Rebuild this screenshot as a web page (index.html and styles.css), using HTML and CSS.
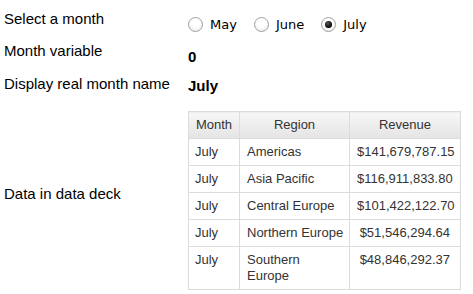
FILE: index.html
```
<!DOCTYPE html>
<html lang="en">
<head>
    <meta charset="UTF-8">
    <title>Month selector</title>
    <link rel="stylesheet" href="styles.css">
</head>
<body>
    <div class="page">
        <div class="row row-select">
            <div class="label">Select a month</div>
            <div class="value radios">
                <label class="radio"><input type="radio" name="month" value="5"> May</label>
                <label class="radio"><input type="radio" name="month" value="6"> June</label>
                <label class="radio"><input type="radio" name="month" value="7" checked> July</label>
            </div>
        </div>
        <div class="row row-var">
            <div class="label">Month variable</div>
            <div class="value strong">0</div>
        </div>
        <div class="row row-name">
            <div class="label">Display real month name</div>
            <div class="value strong">July</div>
        </div>
        <div class="row row-deck">
            <div class="label deck-label">Data in data deck</div>
            <table class="deck">
                <colgroup>
                    <col class="c-month">
                    <col class="c-region">
                    <col class="c-revenue">
                </colgroup>
                <thead>
                    <tr><th>Month</th><th>Region</th><th>Revenue</th></tr>
                </thead>
                <tbody>
                    <tr><td>July</td><td>Americas</td><td class="num">$141,679,787.15</td></tr>
                    <tr><td>July</td><td>Asia Pacific</td><td class="num">$116,911,833.80</td></tr>
                    <tr><td>July</td><td>Central Europe</td><td class="num">$101,422,122.70</td></tr>
                    <tr><td>July</td><td>Northern Europe</td><td class="num">$51,546,294.64</td></tr>
                    <tr><td>July</td><td>Southern<br>Europe</td><td class="num">$48,846,292.37</td></tr>
                </tbody>
            </table>
        </div>
    </div>
</body>
</html>
```

FILE: styles.css
```
body { margin: 0; background: #fff; font-family: "Liberation Sans", Arial, sans-serif; color: #000; }
.page { padding: 10px 0 0 4px; }
.row { display: flex; align-items: flex-start; }
.label { width: 184px; font-size: 15px; line-height: 17px; flex: none; }
.value { font-size: 15px; line-height: 17px; }
.strong { font-weight: bold; }
.row-select { height: 32px; }
.row-select .value { padding-top: 6px; }
.row-var { height: 33px; }
.row-var .value { padding-top: 6px; }
.row-name { height: 36px; }
.row-name .value { padding-top: 2px; }
.row-deck { align-items: center; }
.deck-label { padding-bottom: 14px; }

.radios { display: flex; gap: 17px; font-family: "DejaVu Sans", Tahoma, sans-serif; font-size: 13px; }
.radio { display: flex; align-items: center; gap: 7px; }
.radio input { appearance: none; -webkit-appearance: none; margin: 0; width: 15px; height: 15px; border-radius: 50%; border: 1px solid #a0a0a0; background: radial-gradient(circle at 50% 35%, #fff 40%, #e6e6e6 100%); box-sizing: border-box; display: grid; place-items: center; }
.radio input:checked::after { content: ""; width: 7px; height: 7px; border-radius: 50%; background: radial-gradient(circle at 40% 35%, #555, #000 70%); }

.deck { border-collapse: collapse; table-layout: fixed; width: 272px; font-size: 13px; line-height: 16px; color: #333; }
.c-month { width: 51px; }
.c-region { width: 110px; }
.c-revenue { width: 111px; }
.deck th, .deck td { border: 1px solid #dcdcdc; padding: 5px 4px 5px 7px; vertical-align: top; text-align: left; white-space: nowrap; }
.deck th { font-weight: normal; text-align: center; background: linear-gradient(#f7f7f7, #e4e4e4); padding: 5px 4px; }
.deck td:first-child { padding-left: 6px; padding-right: 4px; }
.deck td.num { text-align: right; padding-right: 10px; }
```
